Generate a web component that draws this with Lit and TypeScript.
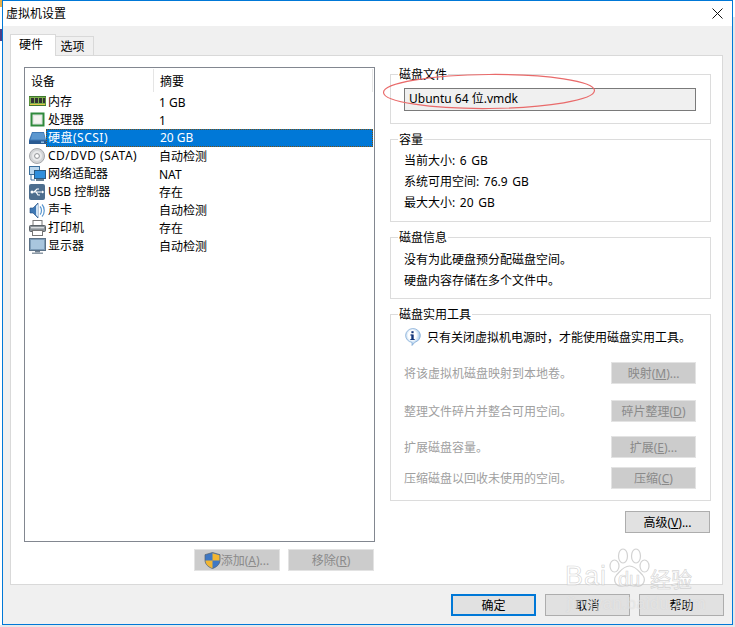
import { LitElement, html, css, svg } from "lit";
import { customElement } from "lit/decorators.js";

const icons: Record<string, unknown> = {
  mem: svg`<rect x="0" y="2.500" width="17" height="9" fill="#7fb04e" stroke="#3f7a2e"/><rect x="2" y="4" width="3" height="5" fill="#333"/><rect x="6" y="4" width="3" height="5" fill="#333"/><rect x="10" y="4" width="3" height="5" fill="#333"/><rect x="14" y="4" width="2" height="5" fill="#333"/><rect x="1" y="10" width="15" height="1" fill="#e6c84a"/>`,
  cpu: svg`<rect x="2.500" y="1.500" width="12" height="12" fill="#e4e8e4" stroke="#2f8a3c" stroke-width="2"/><rect x="5" y="4" width="7" height="7" fill="#f4f4f0"/>`,
  hdd: svg`<path d="M3 2h12l2 8v4H0v-4z" fill="#3f78b4"/><path d="M3.500 3h11l1.600 6.500H1.800z" fill="#5b97cf"/><rect x="0" y="10.500" width="17" height="3.500" fill="#2a5b92"/><rect x="12" y="11.500" width="3" height="1.400" fill="#9cc8ee"/>`,
  cd: svg`<circle cx="8" cy="8" r="7.500" fill="#d2d4d6" stroke="#a5a7aa"/><circle cx="8" cy="8" r="5" fill="#e9eaeb"/><circle cx="8" cy="8" r="2.400" fill="#fff" stroke="#8e9194"/>`,
  net: svg`<rect x="0.500" y="0.500" width="10" height="8" fill="#bcd8ee" stroke="#3b6f9c"/><rect x="5.500" y="4.500" width="11" height="8" fill="#2f8fdc" stroke="#2a5b82"/><rect x="7" y="13" width="8" height="2" fill="#6b7f90"/><path d="M2 9v5h4" fill="none" stroke="#3b6f9c"/>`,
  usb: svg`<rect x="0" y="0" width="16" height="16" rx="2" fill="#4d6e8e"/><circle cx="3" cy="8" r="1.500" fill="#fff"/><path d="M3 8h10M5 8l3-3h2M7 8l2 3h2" fill="none" stroke="#fff" stroke-width="1.200"/><path d="M13 6.500l2.400 1.500L13 9.500z" fill="#fff"/>`,
  snd: svg`<path d="M1 6h3l5-5v15l-5-5H1z" fill="#3f78b4" stroke="#1f4c80" stroke-width=".6"/><path d="M7 4l2-2v13l-2-2z" fill="#cfe3f5"/><path d="M11 4.500c2 2 2 6 0 8M13 2.500c3 3 3 9 0 12" fill="none" stroke="#5b97cf" stroke-width="1.200"/>`,
  prn: svg`<rect x="4" y="0.500" width="9" height="5" fill="#fff" stroke="#777"/><rect x="0.500" y="5.500" width="16" height="6" rx="1" fill="#8a9298" stroke="#5c6368"/><rect x="3.500" y="10.500" width="10" height="5" fill="#fff" stroke="#777"/><rect x="2" y="7" width="13" height="1.400" fill="#d8dcdf"/>`,
  mon: svg`<rect x="0.500" y="0.500" width="16" height="12" fill="#7d9cb8" stroke="#5c7287"/><rect x="2" y="2" width="13" height="9" fill="#a9c6de"/><rect x="6" y="13" width="5" height="1.500" fill="#708090"/><rect x="3" y="14.500" width="11" height="1.500" fill="#8d9aa6"/>`,
};

const devices = [
  ["mem", "内存", "1 GB", ""],
  ["cpu", "处理器", "1", ""],
  ["hdd", "硬盘(SCSI)", "20 GB", "ls"],
  ["cd", "CD/DVD (SATA)", "自动检测", "ls"],
  ["net", "网络适配器", "NAT", ""],
  ["usb", "USB 控制器", "存在", ""],
  ["snd", "声卡", "自动检测", ""],
  ["prn", "打印机", "存在", ""],
  ["mon", "显示器", "自动检测", ""],
];

@customElement("app-root")
export class AppRoot extends LitElement {
  static styles = css`
    :host {
      display: block;
      width: 735px;
      height: 627px;
      position: relative;
      overflow: hidden;
      background: #fff;
      font-family: "Noto Sans", "Noto Sans CJK SC", sans-serif;
      font-size: 12px;
      color: #000;
    }
    * { box-sizing: border-box; }
    .window {
      margin-left: 2px;
      width: 731px;
      height: 625px;
      border: 1px solid #0078d7;
      display: flex;
      flex-direction: column;
      background: #f0f0f0;
      position: relative;
    }
    .title {
      height: 25px;
      flex: none;
      background: #fff;
      display: flex;
      align-items: center;
      justify-content: space-between;
      padding: 0 9px 0 3px;
      line-height: 16px;
    }
    .tabs { display: flex; align-items: flex-end; height: 29px; flex: none; padding-left: 7px; }
    .tab {
      border: 1px solid #d9d9d9;
      border-bottom: none;
      display: flex;
      align-items: center;
      justify-content: center;
    }
    .tab.on { width: 46px; height: 22px; background: #fff; margin-bottom: -1px; position: relative; z-index: 1; padding: 0 4px 3px 0; }
    .tab.off { width: 39px; height: 19px; margin-left: -1px; border-left: none; padding: 0 3px 1px 0; }
    .pane {
      margin-left: 7px;
      width: 713px;
      height: 530px;
      flex: none;
      background: #fff;
      border: 1px solid #d9d9d9;
      padding: 11px 11px 0 13px;
      display: flex;
      gap: 15px;
    }
    .left { width: 351px; flex: none; display: flex; flex-direction: column; }
    .list {
      height: 475px;
      border: 1px solid #828790;
      background: #fff;
      padding: 0 1px;
    }
    .head { display: flex; height: 25px; align-items: center; }
    .head div { height: 23px; display: flex; align-items: center; padding-left: 5px; }
    .head .c1 { width: 128px; border-right: 1px solid #e5e5e5; }
    .head .c2 { flex: 1; padding-left: 6px; border-right: 1px solid #e5e5e5; }
    .row { display: flex; height: 18px; align-items: center; white-space: nowrap; }
    .ico { width: 17px; height: 16px; margin-left: 3px; flex: none; display: block; }
    .name { width: 108px; padding-left: 2px; height: 18px; line-height: 18px; flex: none; }
    .ls { letter-spacing: .5px; }
    .row.sel .name { background: #0078d7; color: #fff; width: 327px; display: flex; outline: 1px dotted #7a4f10; outline-offset: -1px; }
    .row.sel .name .n { width: 112px; flex: none; }
    .val { padding-left: 5px; }
    .actions { display: flex; justify-content: flex-end; gap: 8px; margin: 7px 1px 0 0; }
    .btn {
      width: 85px;
      height: 22px;
      display: flex;
      align-items: center;
      justify-content: center;
      background: #e1e1e1;
      border: 1px solid #adadad;
      white-space: nowrap;
      flex: none;
    }
    .actions .btn { width: 86px; }
    .btn.dis { background: #cccccc; border: 1px solid #e3e3e3; color: #8a8a8a; }
    .btn.ok { border: 2px solid #0078d7; }
    .shield { width: 17px; height: 17px; flex: none; margin-left: -1px; }
    .right { width: 321px; flex: none; display: flex; flex-direction: column; gap: 7px; margin-top: -1px; }
    fieldset {
      margin: 0;
      min-width: 0;
      border: 1px solid #dcdcdc;
      padding: 0 14px 0 13px;
    }
    legend { margin-left: -6px; padding: 0 1px; line-height: 18px; height: 16px; }
    .g1 { height: 58px; padding-top: 6px; }
    .g2 { height: 91px; padding-top: 3px; word-spacing: 1.500px; }
    .g3 { height: 70px; padding-top: 4px; }
    .g4 { height: 195px; padding-top: 4px; }
    .line { height: 21px; line-height: 21px; }
    .file {
      height: 23px;
      border: 1px solid #7a7a7a;
      background: #f0f0f0;
      padding-left: 4px;
      line-height: 19px;
    }
    .info { display: flex; align-items: center; gap: 6px; height: 22px; }
    .info svg { width: 17px; height: 18px; flex: none; }
    .tool { display: flex; justify-content: space-between; align-items: center; color: #a0a0a0; height: 22px; }
    .t1 { margin-top: 14px; }
    .t2 { margin-top: 16px; }
    .t3 { margin-top: 14px; }
    .t4 { margin-top: 9px; }
    .adv { display: flex; justify-content: flex-end; padding-right: 1px; margin-top: 3px; }
    .bottom { display: flex; justify-content: flex-end; gap: 9px; padding: 9px 8px 0 0; }
    .ellipse { position: absolute; left: 380px; top: 70px; width: 220px; height: 44px; pointer-events: none; }
    .wm { position: absolute; left: 555px; top: 545px; width: 180px; height: 75px; pointer-events: none; }
    .wm-a, .wm-b, .wm-du {
      position: absolute;
      color: rgba(255,255,255,.6);
      -webkit-text-stroke: .7px rgba(195,195,195,.7);
      white-space: nowrap;
      font-family: "Liberation Sans", sans-serif;
    }
    .wm-a { left: 10px; top: 16px; font-size: 27px; line-height: 30px; letter-spacing: 1px; }
    .wm-du { left: 63px; top: 22px; font-size: 20px; line-height: 24px; }
    .wm-b { left: 95px; top: 21px; font-size: 21px; line-height: 24px; font-family: "Noto Sans CJK SC", sans-serif; }
    .wm-c {
      position: absolute;
      left: 12px;
      top: 51px;
      font-size: 16px;
      line-height: 16px;
      letter-spacing: .6px;
      color: rgba(255,255,255,.4);
      text-shadow: 0 0 1px rgba(190,190,190,.55);
      white-space: nowrap;
      font-family: "Liberation Sans", sans-serif;
    }
    .paw { position: absolute; left: 54px; top: 2px; width: 41px; height: 44px; }
    .edge { position: absolute; }
    .e1 { left: 0; top: 0; width: 2px; height: 7px; background: #e8b04a; }
    .e2 { left: 0; top: 29px; width: 2px; height: 12px; background: #4a3f88; }
    .e3 { left: 733px; top: 17px; width: 2px; height: 610px; background: #e4e6e9; }
    .e4 { left: 0; top: 625px; width: 735px; height: 2px; background: #e8e8ea; }
  `;

  render() {
    return html`
      <div class="window">
        <div class="title">
          <span>虚拟机设置</span>
          <svg width="11" height="11" viewBox="0 0 11 11"><path d="M0.500 0.500l10 10M10.500 0.500l-10 10" stroke="#111" stroke-width="1" fill="none"/></svg>
        </div>
        <div class="tabs">
          <div class="tab on">硬件</div>
          <div class="tab off">选项</div>
        </div>
        <div class="pane">
          <div class="left">
            <div class="list">
              <div class="head"><div class="c1">设备</div><div class="c2">摘要</div></div>
              ${devices.map(([k, n, v, c]) =>
                k === "hdd"
                  ? html`<div class="row sel"><svg class="ico" viewBox="0 0 17 16">${icons[k]}</svg><div class="name"><span class="n ${c}">${n}</span><span>${v}</span></div></div>`
                  : html`<div class="row"><svg class="ico" viewBox="0 0 17 16">${icons[k]}</svg><div class="name ${c}">${n}</div><div class="val">${v}</div></div>`
              )}
            </div>
            <div class="actions">
              <div class="btn dis">
                <svg class="shield" viewBox="0 0 17 17"><path d="M8.500 .5l7.500 2.200v5.300c0 4.500-3.500 7.200-7.500 8.500C4.500 15.200 1 12.500 1 8V2.700z" fill="#3f78c4" stroke="#55606a" stroke-width=".7"/><path d="M8.500 1.200l7 2v5.300h-7zM8.500 8.500v7.700C5 15 1.500 12.500 1.500 8.500z" fill="#f2b632"/></svg>
                <span>添加(<u>A</u>)...</span>
              </div>
              <div class="btn dis"><span>移除(<u>R</u>)</span></div>
            </div>
          </div>
          <div class="right">
            <fieldset class="g1"><legend>磁盘文件</legend><div class="file">Ubuntu 64 位.vmdk</div></fieldset>
            <fieldset class="g2"><legend>容量</legend>
              <div class="line">当前大小: 6 GB</div>
              <div class="line">系统可用空间: 76.9 GB</div>
              <div class="line">最大大小: 20 GB</div>
            </fieldset>
            <fieldset class="g3"><legend>磁盘信息</legend>
              <div class="line">没有为此硬盘预分配磁盘空间。</div>
              <div class="line">硬盘内容存储在多个文件中。</div>
            </fieldset>
            <fieldset class="g4"><legend>磁盘实用工具</legend>
              <div class="info">
                <svg viewBox="0 0 17 18">
                  <defs><radialGradient id="bub" cx=".45" cy=".4" r=".6"><stop offset=".45" stop-color="#fff"/><stop offset="1" stop-color="#84b6e6"/></radialGradient></defs>
                  <path d="M8.500 .5a7.500 7 0 0 1 2.500 13.700L8 17.500v-3.100A7.500 7 0 0 1 8.500 .5z" fill="url(#bub)" stroke="#7fa8d2" stroke-width=".7"/>
                  <rect x="7.300" y="6.500" width="2.400" height="5" fill="#12357a"/><rect x="6.300" y="6.500" width="2" height="1" fill="#12357a"/><rect x="6.300" y="11" width="4.400" height="1" fill="#12357a"/><rect x="7.400" y="3.200" width="2.200" height="2" fill="#12357a"/>
                </svg>
                <span>只有关闭虚拟机电源时，才能使用磁盘实用工具。</span>
              </div>
              <div class="tool t1"><span>将该虚拟机磁盘映射到本地卷。</span><div class="btn dis"><span>映射(<u>M</u>)...</span></div></div>
              <div class="tool t2"><span>整理文件碎片并整合可用空间。</span><div class="btn dis"><span>碎片整理(<u>D</u>)</span></div></div>
              <div class="tool t3"><span>扩展磁盘容量。</span><div class="btn dis"><span>扩展(<u>E</u>)...</span></div></div>
              <div class="tool t4"><span>压缩磁盘以回收未使用的空间。</span><div class="btn dis"><span>压缩(<u>C</u>)</span></div></div>
            </fieldset>
            <div class="adv"><div class="btn"><span>高级(<u>V</u>)...</span></div></div>
          </div>
        </div>
        <div class="bottom">
          <div class="btn ok">确定</div>
          <div class="btn">取消</div>
          <div class="btn">帮助</div>
        </div>
      </div>
      <div class="edge e1"></div>
      <div class="edge e2"></div>
      <div class="edge e3"></div>
      <div class="edge e4"></div>
      <svg class="ellipse" viewBox="0 0 220 44"><ellipse cx="109" cy="21.500" rx="105.500" ry="17" fill="none" stroke="#e96a6a" stroke-width="1.200" transform="rotate(-0.500 109 21.500)"/></svg>
      <div class="wm">
        <svg class="paw" viewBox="0 0 41 44" fill="rgba(255,255,255,.5)" stroke="rgba(195,195,195,.75)" stroke-width="1.200">
          <ellipse cx="14" cy="9" rx="4.500" ry="7"/><ellipse cx="27" cy="9" rx="4.500" ry="7"/>
          <ellipse cx="5.500" cy="19" rx="4.500" ry="6"/><ellipse cx="35.500" cy="19" rx="4.500" ry="6"/>
          <path d="M20.500 19c6 0 9 5 13 9 4 5 1 12-6 11-3-.5-11-.5-14 0-7 1-10-6-6-11 4-4 7-9 13-9z"/>
        </svg>
        <div class="wm-a">Bai</div>
        <div class="wm-du">du</div>
        <div class="wm-b">经验</div>
        <div class="wm-c">jingyan.baidu.com</div>
      </div>
    `;
  }
}
